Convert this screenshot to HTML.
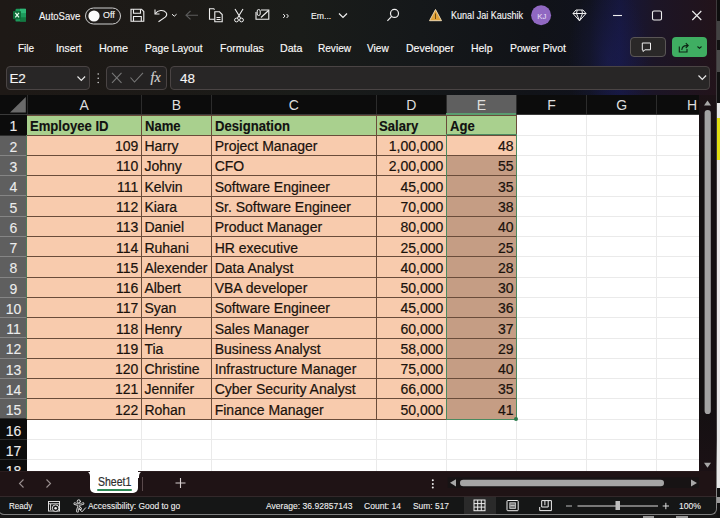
<!DOCTYPE html>
<html><head><meta charset="utf-8">
<style>
*{box-sizing:border-box;margin:0;padding:0}
html,body{width:720px;height:518px;overflow:hidden;background:#161314;font-family:"Liberation Sans",sans-serif;color:#fff;position:relative}
div,span,svg{position:absolute}
.t{white-space:nowrap;font-size:11px;color:#f6f6f6;line-height:12px;-webkit-text-stroke:0.12px #f6f6f6}
.tab{white-space:nowrap;font-size:11.5px;color:#fafafa;-webkit-text-stroke:0.15px #fafafa;line-height:12px;top:43px}
.box{border:1px solid #4a4848;background:rgba(255,255,255,0.05);border-radius:4px}
.ch{background:#0c0c0c;color:#dedede;font-size:14px;text-align:center;line-height:21px}
.rh{background:#0c0c0c;color:#ececec;font-size:14px;text-align:center;-webkit-text-stroke:0.1px #ececec}
.c{font-size:14px;color:#1a120c;white-space:nowrap;line-height:16px;-webkit-text-stroke:0.2px #1a120c}
.b{font-weight:bold;font-size:14px;transform:scaleX(0.935);transform-origin:0 0;-webkit-text-stroke:0.15px #111}
</style></head><body>

<div style="left:0;top:0;width:717px;height:96px;background:
 radial-gradient(ellipse 40px 80px at 608px 60px, rgba(35,38,120,0.32), rgba(35,38,120,0) 100%),
 linear-gradient(90deg,#1e1916 0px,#1c1a17 180px,#1a1c19 300px,#15181a 420px,#111318 530px,#10121c 590px,#15163a 620px,#1c1526 655px,#22131a 717px);"></div>
<div style="left:0;top:95.0px;width:699.3px;height:375.6px;background:#fff;overflow:hidden">
<div style="left:27px;top:40.0px;width:699.3px;height:1px;background:#eaeaea"></div>
<div style="left:27px;top:60.0px;width:699.3px;height:1px;background:#eaeaea"></div>
<div style="left:27px;top:80.0px;width:699.3px;height:1px;background:#eaeaea"></div>
<div style="left:27px;top:101.0px;width:699.3px;height:1px;background:#eaeaea"></div>
<div style="left:27px;top:121.0px;width:699.3px;height:1px;background:#eaeaea"></div>
<div style="left:27px;top:141.0px;width:699.3px;height:1px;background:#eaeaea"></div>
<div style="left:27px;top:161.0px;width:699.3px;height:1px;background:#eaeaea"></div>
<div style="left:27px;top:182.0px;width:699.3px;height:1px;background:#eaeaea"></div>
<div style="left:27px;top:202.0px;width:699.3px;height:1px;background:#eaeaea"></div>
<div style="left:27px;top:222.0px;width:699.3px;height:1px;background:#eaeaea"></div>
<div style="left:27px;top:243.0px;width:699.3px;height:1px;background:#eaeaea"></div>
<div style="left:27px;top:263.0px;width:699.3px;height:1px;background:#eaeaea"></div>
<div style="left:27px;top:283.0px;width:699.3px;height:1px;background:#eaeaea"></div>
<div style="left:27px;top:303.0px;width:699.3px;height:1px;background:#eaeaea"></div>
<div style="left:27px;top:324.0px;width:699.3px;height:1px;background:#eaeaea"></div>
<div style="left:27px;top:344.0px;width:699.3px;height:1px;background:#eaeaea"></div>
<div style="left:27px;top:364.0px;width:699.3px;height:1px;background:#eaeaea"></div>
<div style="left:27px;top:384.0px;width:699.3px;height:1px;background:#eaeaea"></div>
<div style="left:27px;top:405.0px;width:699.3px;height:1px;background:#eaeaea"></div>
<div style="left:141px;top:0;width:1px;height:375.6px;background:#eaeaea"></div>
<div style="left:211px;top:0;width:1px;height:375.6px;background:#eaeaea"></div>
<div style="left:376px;top:0;width:1px;height:375.6px;background:#eaeaea"></div>
<div style="left:446px;top:0;width:1px;height:375.6px;background:#eaeaea"></div>
<div style="left:516px;top:0;width:1px;height:375.6px;background:#eaeaea"></div>
<div style="left:586px;top:0;width:1px;height:375.6px;background:#eaeaea"></div>
<div style="left:656px;top:0;width:1px;height:375.6px;background:#eaeaea"></div>
<div style="left:27px;top:19.9px;width:489.5px;height:20.27px;background:#a9d08e"></div>
<div style="left:27px;top:40.17px;width:489.5px;height:283.78px;background:#f8cbad"></div>
<div style="left:446.3px;top:60.44px;width:70.19999999999999px;height:263.51px;background:#c59d84"></div>
<div style="left:27px;top:20.0px;width:489.5px;height:1px;background:#6a4c3a"></div>
<div style="left:27px;top:40.0px;width:489.5px;height:1px;background:#6a4c3a"></div>
<div style="left:27px;top:60.0px;width:489.5px;height:1px;background:#6a4c3a"></div>
<div style="left:27px;top:80.0px;width:489.5px;height:1px;background:#6a4c3a"></div>
<div style="left:27px;top:101.0px;width:489.5px;height:1px;background:#6a4c3a"></div>
<div style="left:27px;top:121.0px;width:489.5px;height:1px;background:#6a4c3a"></div>
<div style="left:27px;top:141.0px;width:489.5px;height:1px;background:#6a4c3a"></div>
<div style="left:27px;top:161.0px;width:489.5px;height:1px;background:#6a4c3a"></div>
<div style="left:27px;top:182.0px;width:489.5px;height:1px;background:#6a4c3a"></div>
<div style="left:27px;top:202.0px;width:489.5px;height:1px;background:#6a4c3a"></div>
<div style="left:27px;top:222.0px;width:489.5px;height:1px;background:#6a4c3a"></div>
<div style="left:27px;top:243.0px;width:489.5px;height:1px;background:#6a4c3a"></div>
<div style="left:27px;top:263.0px;width:489.5px;height:1px;background:#6a4c3a"></div>
<div style="left:27px;top:283.0px;width:489.5px;height:1px;background:#6a4c3a"></div>
<div style="left:27px;top:303.0px;width:489.5px;height:1px;background:#6a4c3a"></div>
<div style="left:27px;top:324.0px;width:489.5px;height:1px;background:#6a4c3a"></div>
<div style="left:141px;top:19.9px;width:1px;height:304.05px;background:#6a4c3a"></div>
<div style="left:211px;top:19.9px;width:1px;height:304.05px;background:#6a4c3a"></div>
<div style="left:376px;top:19.9px;width:1px;height:304.05px;background:#6a4c3a"></div>
<div style="left:446px;top:19.9px;width:1px;height:304.05px;background:#6a4c3a"></div>
<div style="left:516px;top:19.9px;width:1px;height:304.05px;background:#6a4c3a"></div>
<div class="ch" style="left:27px;top:0;width:114.4px;height:19.900000000000006px;background:#0c0c0c">A</div>
<div style="left:26.5px;top:0;width:1px;height:19.900000000000006px;background:#2c2c2c"></div>
<div class="ch" style="left:141.4px;top:0;width:70.29999999999998px;height:19.900000000000006px;background:#0c0c0c">B</div>
<div style="left:140.9px;top:0;width:1px;height:19.900000000000006px;background:#2c2c2c"></div>
<div class="ch" style="left:211.7px;top:0;width:164.40000000000003px;height:19.900000000000006px;background:#0c0c0c">C</div>
<div style="left:211.2px;top:0;width:1px;height:19.900000000000006px;background:#2c2c2c"></div>
<div class="ch" style="left:376.1px;top:0;width:70.19999999999999px;height:19.900000000000006px;background:#0c0c0c">D</div>
<div style="left:375.6px;top:0;width:1px;height:19.900000000000006px;background:#2c2c2c"></div>
<div class="ch" style="left:446.3px;top:0;width:70.19999999999999px;height:19.900000000000006px;background:#5f5f5f">E</div>
<div style="left:445.8px;top:0;width:1px;height:19.900000000000006px;background:#2c2c2c"></div>
<div class="ch" style="left:516.5px;top:0;width:70.20000000000005px;height:19.900000000000006px;background:#0c0c0c">F</div>
<div style="left:516.0px;top:0;width:1px;height:19.900000000000006px;background:#2c2c2c"></div>
<div class="ch" style="left:586.7px;top:0;width:70.19999999999993px;height:19.900000000000006px;background:#0c0c0c">G</div>
<div style="left:586.2px;top:0;width:1px;height:19.900000000000006px;background:#2c2c2c"></div>
<div class="ch" style="left:656.9px;top:0;width:70.10000000000002px;height:19.900000000000006px;background:#0c0c0c">H</div>
<div style="left:656.4px;top:0;width:1px;height:19.900000000000006px;background:#2c2c2c"></div>
<div style="left:0;top:0;width:27px;height:19.900000000000006px;background:#0c0c0c"></div>
<svg style="left:0;top:0" width="27" height="20"><polygon points="25.8,2 25.8,17.5 10,17.5" fill="#6a6a6a"/></svg>
<div style="left:0;top:18.9px;width:699.3px;height:1px;background:#3a3a3a"></div>
<div style="left:446.3px;top:18.4px;width:70.19999999999999px;height:1.5px;background:#5a9d70"></div>
<div class="rh" style="left:0;top:19.9px;width:27px;height:20.27px;background:#0c0c0c;line-height:20.27px;padding-top:1.6px">1</div>
<div class="rh" style="left:0;top:40.17px;width:27px;height:20.27px;background:#5f5f5f;line-height:20.27px;padding-top:1.6px">2</div>
<div class="rh" style="left:0;top:60.44px;width:27px;height:20.27px;background:#5f5f5f;line-height:20.27px;padding-top:1.6px">3</div>
<div class="rh" style="left:0;top:80.71px;width:27px;height:20.27px;background:#5f5f5f;line-height:20.27px;padding-top:1.6px">4</div>
<div class="rh" style="left:0;top:100.98px;width:27px;height:20.27px;background:#5f5f5f;line-height:20.27px;padding-top:1.6px">5</div>
<div class="rh" style="left:0;top:121.25px;width:27px;height:20.27px;background:#5f5f5f;line-height:20.27px;padding-top:1.6px">6</div>
<div class="rh" style="left:0;top:141.52px;width:27px;height:20.27px;background:#5f5f5f;line-height:20.27px;padding-top:1.6px">7</div>
<div class="rh" style="left:0;top:161.79px;width:27px;height:20.27px;background:#5f5f5f;line-height:20.27px;padding-top:1.6px">8</div>
<div class="rh" style="left:0;top:182.06px;width:27px;height:20.27px;background:#5f5f5f;line-height:20.27px;padding-top:1.6px">9</div>
<div class="rh" style="left:0;top:202.33px;width:27px;height:20.27px;background:#5f5f5f;line-height:20.27px;padding-top:1.6px">10</div>
<div class="rh" style="left:0;top:222.6px;width:27px;height:20.27px;background:#5f5f5f;line-height:20.27px;padding-top:1.6px">11</div>
<div class="rh" style="left:0;top:242.87px;width:27px;height:20.27px;background:#5f5f5f;line-height:20.27px;padding-top:1.6px">12</div>
<div class="rh" style="left:0;top:263.14px;width:27px;height:20.27px;background:#5f5f5f;line-height:20.27px;padding-top:1.6px">13</div>
<div class="rh" style="left:0;top:283.41px;width:27px;height:20.27px;background:#5f5f5f;line-height:20.27px;padding-top:1.6px">14</div>
<div class="rh" style="left:0;top:303.68px;width:27px;height:20.27px;background:#5f5f5f;line-height:20.27px;padding-top:1.6px">15</div>
<div class="rh" style="left:0;top:323.95px;width:27px;height:20.27px;background:#0c0c0c;line-height:20.27px;padding-top:1.6px">16</div>
<div class="rh" style="left:0;top:344.22px;width:27px;height:20.27px;background:#0c0c0c;line-height:20.27px;padding-top:1.6px">17</div>
<div class="rh" style="left:0;top:364.49px;width:27px;height:20.27px;background:#0c0c0c;line-height:20.27px;padding-top:1.6px">18</div>
<div style="left:0;top:39.67px;width:27px;height:1px;background:#2c2c2c"></div>
<div style="left:0;top:59.94px;width:27px;height:1px;background:#858585"></div>
<div style="left:0;top:80.21px;width:27px;height:1px;background:#858585"></div>
<div style="left:0;top:100.48px;width:27px;height:1px;background:#858585"></div>
<div style="left:0;top:120.75px;width:27px;height:1px;background:#858585"></div>
<div style="left:0;top:141.02px;width:27px;height:1px;background:#858585"></div>
<div style="left:0;top:161.29px;width:27px;height:1px;background:#858585"></div>
<div style="left:0;top:181.56px;width:27px;height:1px;background:#858585"></div>
<div style="left:0;top:201.83px;width:27px;height:1px;background:#858585"></div>
<div style="left:0;top:222.1px;width:27px;height:1px;background:#858585"></div>
<div style="left:0;top:242.37px;width:27px;height:1px;background:#858585"></div>
<div style="left:0;top:262.64px;width:27px;height:1px;background:#858585"></div>
<div style="left:0;top:282.91px;width:27px;height:1px;background:#858585"></div>
<div style="left:0;top:303.18px;width:27px;height:1px;background:#858585"></div>
<div style="left:0;top:323.45px;width:27px;height:1px;background:#2c2c2c"></div>
<div style="left:0;top:343.72px;width:27px;height:1px;background:#2c2c2c"></div>
<div style="left:0;top:363.99px;width:27px;height:1px;background:#2c2c2c"></div>
<div style="left:0;top:384.26px;width:27px;height:1px;background:#2c2c2c"></div>
<div style="left:0;top:19.4px;width:27px;height:1px;background:#3a3a3a"></div>
<div style="left:26px;top:40.17px;width:1.2px;height:283.78px;background:#4d7a5a"></div>
<div class="c b" style="left:30.3px;top:23.4px;color:#111">Employee ID</div>
<div class="c b" style="left:144.70000000000002px;top:23.4px;color:#111">Name</div>
<div class="c b" style="left:215.0px;top:23.4px;color:#111">Designation</div>
<div class="c b" style="left:379.40000000000003px;top:23.4px;color:#111">Salary</div>
<div class="c b" style="left:449.6px;top:23.4px;color:#111">Age</div>
<div class="c" style="left:27px;width:111.4px;text-align:right;top:43.17px">109</div>
<div class="c" style="left:144.4px;top:43.17px">Harry</div>
<div class="c" style="left:214.7px;top:43.17px">Project Manager</div>
<div class="c" style="left:376.1px;width:67.19999999999999px;text-align:right;top:43.17px">1,00,000</div>
<div class="c" style="left:446.3px;width:67.19999999999999px;text-align:right;top:43.17px">48</div>
<div class="c" style="left:27px;width:111.4px;text-align:right;top:63.44px">110</div>
<div class="c" style="left:144.4px;top:63.44px">Johny</div>
<div class="c" style="left:214.7px;top:63.44px">CFO</div>
<div class="c" style="left:376.1px;width:67.19999999999999px;text-align:right;top:63.44px">2,00,000</div>
<div class="c" style="left:446.3px;width:67.19999999999999px;text-align:right;top:63.44px">55</div>
<div class="c" style="left:27px;width:111.4px;text-align:right;top:83.71px">111</div>
<div class="c" style="left:144.4px;top:83.71px">Kelvin</div>
<div class="c" style="left:214.7px;top:83.71px">Software Engineer</div>
<div class="c" style="left:376.1px;width:67.19999999999999px;text-align:right;top:83.71px">45,000</div>
<div class="c" style="left:446.3px;width:67.19999999999999px;text-align:right;top:83.71px">35</div>
<div class="c" style="left:27px;width:111.4px;text-align:right;top:103.98px">112</div>
<div class="c" style="left:144.4px;top:103.98px">Kiara</div>
<div class="c" style="left:214.7px;top:103.98px">Sr. Software Engineer</div>
<div class="c" style="left:376.1px;width:67.19999999999999px;text-align:right;top:103.98px">70,000</div>
<div class="c" style="left:446.3px;width:67.19999999999999px;text-align:right;top:103.98px">38</div>
<div class="c" style="left:27px;width:111.4px;text-align:right;top:124.25px">113</div>
<div class="c" style="left:144.4px;top:124.25px">Daniel</div>
<div class="c" style="left:214.7px;top:124.25px">Product Manager</div>
<div class="c" style="left:376.1px;width:67.19999999999999px;text-align:right;top:124.25px">80,000</div>
<div class="c" style="left:446.3px;width:67.19999999999999px;text-align:right;top:124.25px">40</div>
<div class="c" style="left:27px;width:111.4px;text-align:right;top:144.52px">114</div>
<div class="c" style="left:144.4px;top:144.52px">Ruhani</div>
<div class="c" style="left:214.7px;top:144.52px">HR executive</div>
<div class="c" style="left:376.1px;width:67.19999999999999px;text-align:right;top:144.52px">25,000</div>
<div class="c" style="left:446.3px;width:67.19999999999999px;text-align:right;top:144.52px">25</div>
<div class="c" style="left:27px;width:111.4px;text-align:right;top:164.79px">115</div>
<div class="c" style="left:144.4px;top:164.79px">Alexender</div>
<div class="c" style="left:214.7px;top:164.79px">Data Analyst</div>
<div class="c" style="left:376.1px;width:67.19999999999999px;text-align:right;top:164.79px">40,000</div>
<div class="c" style="left:446.3px;width:67.19999999999999px;text-align:right;top:164.79px">28</div>
<div class="c" style="left:27px;width:111.4px;text-align:right;top:185.06px">116</div>
<div class="c" style="left:144.4px;top:185.06px">Albert</div>
<div class="c" style="left:214.7px;top:185.06px">VBA developer</div>
<div class="c" style="left:376.1px;width:67.19999999999999px;text-align:right;top:185.06px">50,000</div>
<div class="c" style="left:446.3px;width:67.19999999999999px;text-align:right;top:185.06px">30</div>
<div class="c" style="left:27px;width:111.4px;text-align:right;top:205.33px">117</div>
<div class="c" style="left:144.4px;top:205.33px">Syan</div>
<div class="c" style="left:214.7px;top:205.33px">Software Engineer</div>
<div class="c" style="left:376.1px;width:67.19999999999999px;text-align:right;top:205.33px">45,000</div>
<div class="c" style="left:446.3px;width:67.19999999999999px;text-align:right;top:205.33px">36</div>
<div class="c" style="left:27px;width:111.4px;text-align:right;top:225.6px">118</div>
<div class="c" style="left:144.4px;top:225.6px">Henry</div>
<div class="c" style="left:214.7px;top:225.6px">Sales Manager</div>
<div class="c" style="left:376.1px;width:67.19999999999999px;text-align:right;top:225.6px">60,000</div>
<div class="c" style="left:446.3px;width:67.19999999999999px;text-align:right;top:225.6px">37</div>
<div class="c" style="left:27px;width:111.4px;text-align:right;top:245.87px">119</div>
<div class="c" style="left:144.4px;top:245.87px">Tia</div>
<div class="c" style="left:214.7px;top:245.87px">Business Analyst</div>
<div class="c" style="left:376.1px;width:67.19999999999999px;text-align:right;top:245.87px">58,000</div>
<div class="c" style="left:446.3px;width:67.19999999999999px;text-align:right;top:245.87px">29</div>
<div class="c" style="left:27px;width:111.4px;text-align:right;top:266.14px">120</div>
<div class="c" style="left:144.4px;top:266.14px">Christine</div>
<div class="c" style="left:214.7px;top:266.14px">Infrastructure Manager</div>
<div class="c" style="left:376.1px;width:67.19999999999999px;text-align:right;top:266.14px">75,000</div>
<div class="c" style="left:446.3px;width:67.19999999999999px;text-align:right;top:266.14px">40</div>
<div class="c" style="left:27px;width:111.4px;text-align:right;top:286.41px">121</div>
<div class="c" style="left:144.4px;top:286.41px">Jennifer</div>
<div class="c" style="left:214.7px;top:286.41px">Cyber Security Analyst</div>
<div class="c" style="left:376.1px;width:67.19999999999999px;text-align:right;top:286.41px">66,000</div>
<div class="c" style="left:446.3px;width:67.19999999999999px;text-align:right;top:286.41px">35</div>
<div class="c" style="left:27px;width:111.4px;text-align:right;top:306.68px">122</div>
<div class="c" style="left:144.4px;top:306.68px">Rohan</div>
<div class="c" style="left:214.7px;top:306.68px">Finance Manager</div>
<div class="c" style="left:376.1px;width:67.19999999999999px;text-align:right;top:306.68px">50,000</div>
<div class="c" style="left:446.3px;width:67.19999999999999px;text-align:right;top:306.68px">41</div>
<div style="left:445.5px;top:39.370000000000005px;width:71.79999999999998px;height:285.38000000000005px;border:1.3px solid #4a8a60"></div>
<div style="left:514.2px;top:321.65px;width:4px;height:4px;background:#2a7a4c;border-radius:2px"></div>
</div>
<svg style="left:0;top:0" width="717" height="32"><rect x="15.5" y="8.8" width="10.5" height="12.8" rx="1.2" fill="#1d9a5c"/><rect x="20" y="8.8" width="6" height="4.3" fill="#2fb877"/><rect x="20" y="17.3" width="6" height="4.3" fill="#127a42"/><rect x="13" y="11" width="8" height="8.2" rx="0.8" fill="#0f6e3a"/><path d="M15.3 12.9 L19 17.3 M19 12.9 L15.3 17.3" stroke="#e8fff0" stroke-width="1.2"/><rect x="85.5" y="8" width="35" height="16" rx="8" fill="#1f1c1a" stroke="#cfcfcf" stroke-width="1"/><circle cx="94" cy="16" r="5.6" fill="#fafafa"/><path d="M131 9.2 H141.5 L143.8 11.5 V21.3 H131 Z" fill="none" stroke="#efefef" stroke-width="1.1"/><path d="M133.5 9.2 V13.3 H140.5 V9.2" fill="none" stroke="#efefef" stroke-width="1.1"/><path d="M133.5 21.3 V16.5 H141.3 V21.3" fill="none" stroke="#efefef" stroke-width="1.1"/><path d="M155 9.5 V14 H159.5" fill="none" stroke="#efefef" stroke-width="1.1"/><path d="M155.3 13.6 C158 10 163.5 9.5 166 12.5 C167.2 14 166.8 15.6 165.2 17.2 L158.5 21.8" fill="none" stroke="#efefef" stroke-width="1.1"/><path d="M172 14.2 L174.3 16.2 L176.6 14.2" fill="none" stroke="#efefef" stroke-width="1"/><path d="M186 15.2 H198 M190.5 11 L186 15.2 L190.5 19.4" fill="none" stroke="#5c5c5c" stroke-width="1.1"/><path d="M214.5 19.2 H209.5 V8.8 H213.8 L214.5 9.8" fill="none" stroke="#efefef" stroke-width="1.1"/><path d="M214.8 11.8 H219.5 L222.2 14.5 V21.7 H214.8 Z" fill="none" stroke="#efefef" stroke-width="1.1"/><path d="M216.5 17.5 H220.5 M216.5 19.5 H220.5" stroke="#efefef" stroke-width="1"/><path d="M235 9 L240.5 18 M243 9 L237.5 18" stroke="#efefef" stroke-width="1.1"/><circle cx="236.5" cy="20" r="1.9" fill="none" stroke="#efefef" stroke-width="1"/><circle cx="241.5" cy="20" r="1.9" fill="none" stroke="#efefef" stroke-width="1"/><path d="M256 12 V19.3 H268.8 V10 H261" fill="none" stroke="#efefef" stroke-width="1.1"/><path d="M261 17.5 L268.5 10.5" stroke="#efefef" stroke-width="1.1"/><rect x="257.2" y="9.5" width="3" height="6" rx="1.5" fill="none" stroke="#efefef" stroke-width="1"/><path d="M283.2 14 L285 16 L283.2 18 M286.6 14 L288.4 16 L286.6 18" fill="none" stroke="#efefef" stroke-width="1"/><path d="M339 13.5 L343 17.5 L347 13.5" fill="none" stroke="#efefef" stroke-width="1.2"/><circle cx="394.5" cy="13.4" r="4" fill="none" stroke="#efefef" stroke-width="1.2"/><path d="M391.6 16.4 L387.4 20.8" stroke="#efefef" stroke-width="1.2"/><path d="M435.5 9.5 L441.5 20.7 H429.5 Z" fill="#e0a238" stroke="#f4e2bf" stroke-width="0.9" stroke-linejoin="round"/><path d="M435.5 13.5 V19" stroke="#6a4a14" stroke-width="1"/><circle cx="541.1" cy="15.3" r="10" fill="#9068c2"/><path d="M576 10 H583 L586 13.5 L579.5 20.8 L573 13.5 Z M573 13.5 H586 M577.2 10 L576.5 13.5 L579.5 20.8 L582.5 13.5 L581.8 10" fill="none" stroke="#efefef" stroke-width="1"/><path d="M613 15.5 H622" stroke="#efefef" stroke-width="1.1"/><rect x="652.5" y="11" width="9" height="9" rx="1.5" fill="none" stroke="#efefef" stroke-width="1.1"/><path d="M692.3 11 L701.3 20 M701.3 11 L692.3 20" stroke="#efefef" stroke-width="1.1"/></svg>
<div style="left:38.8px;top:8.73px;font-size:10.6px;line-height:14px;color:#f6f6f6;white-space:nowrap;-webkit-text-stroke:0.12px #f6f6f6;transform:scaleX(0.898);transform-origin:0 0;">AutoSave</div>
<div style="left:103.3px;top:9.79px;font-size:8.7px;line-height:11px;color:#f6f6f6;white-space:nowrap;-webkit-text-stroke:0.12px #f6f6f6;transform:scaleX(1.023);transform-origin:0 0;">Off</div>
<div style="left:310.8px;top:9.10px;font-size:9.8px;line-height:13px;color:#f6f6f6;white-space:nowrap;-webkit-text-stroke:0.12px #f6f6f6;transform:scaleX(0.883);transform-origin:0 0;">Em...</div>
<div style="left:451px;top:8.79px;font-size:10px;line-height:13px;color:#f6f6f6;white-space:nowrap;-webkit-text-stroke:0.12px #f6f6f6;transform:scaleX(0.906);transform-origin:0 0;">Kunal Jai Kaushik</div>
<div class="t" style="left:537.3px;top:12px;font-size:7.8px;line-height:9px;color:#ece0f8;-webkit-text-stroke:0">KJ</div>
<div style="left:17.8px;top:41.09px;font-size:11px;line-height:14px;color:#fafafa;white-space:nowrap;-webkit-text-stroke:0.15px #fafafa;transform:scaleX(0.908);transform-origin:0 0;">File</div>
<div style="left:56px;top:41.09px;font-size:11px;line-height:14px;color:#fafafa;white-space:nowrap;-webkit-text-stroke:0.15px #fafafa;transform:scaleX(0.934);transform-origin:0 0;">Insert</div>
<div style="left:99px;top:41.09px;font-size:11px;line-height:14px;color:#fafafa;white-space:nowrap;-webkit-text-stroke:0.15px #fafafa;transform:scaleX(0.988);transform-origin:0 0;">Home</div>
<div style="left:145px;top:41.09px;font-size:11px;line-height:14px;color:#fafafa;white-space:nowrap;-webkit-text-stroke:0.15px #fafafa;transform:scaleX(0.931);transform-origin:0 0;">Page Layout</div>
<div style="left:220px;top:41.09px;font-size:11px;line-height:14px;color:#fafafa;white-space:nowrap;-webkit-text-stroke:0.15px #fafafa;transform:scaleX(0.954);transform-origin:0 0;">Formulas</div>
<div style="left:279.5px;top:41.09px;font-size:11px;line-height:14px;color:#fafafa;white-space:nowrap;-webkit-text-stroke:0.15px #fafafa;transform:scaleX(0.968);transform-origin:0 0;">Data</div>
<div style="left:317.5px;top:41.09px;font-size:11px;line-height:14px;color:#fafafa;white-space:nowrap;-webkit-text-stroke:0.15px #fafafa;transform:scaleX(0.915);transform-origin:0 0;">Review</div>
<div style="left:367px;top:41.09px;font-size:11px;line-height:14px;color:#fafafa;white-space:nowrap;-webkit-text-stroke:0.15px #fafafa;transform:scaleX(0.919);transform-origin:0 0;">View</div>
<div style="left:405.8px;top:41.09px;font-size:11px;line-height:14px;color:#fafafa;white-space:nowrap;-webkit-text-stroke:0.15px #fafafa;transform:scaleX(0.957);transform-origin:0 0;">Developer</div>
<div style="left:471px;top:41.09px;font-size:11px;line-height:14px;color:#fafafa;white-space:nowrap;-webkit-text-stroke:0.15px #fafafa;transform:scaleX(0.950);transform-origin:0 0;">Help</div>
<div style="left:510px;top:41.09px;font-size:11px;line-height:14px;color:#fafafa;white-space:nowrap;-webkit-text-stroke:0.15px #fafafa;transform:scaleX(0.954);transform-origin:0 0;">Power Pivot</div>
<div style="left:630px;top:37px;width:36px;height:20px;border:1px solid #5a5656;border-radius:4px;background:#2a2828"></div>
<svg style="left:630px;top:37px" width="36" height="20"><path d="M12.3 6 H20.5 V12.8 H15 L13 14.5 V12.8 H12.3 Z" fill="none" stroke="#efefef" stroke-width="1" stroke-linejoin="round"/></svg>
<div style="left:672px;top:37px;width:34.5px;height:20px;border-radius:4px;background:#3fae62"></div>
<svg style="left:672px;top:37px" width="35" height="20"><path d="M7.3 9.5 V15 H15 V12" fill="none" stroke="#0c2414" stroke-width="1.1"/><path d="M9.8 13 C10 9.8 11.8 8.6 14.5 8.6 H16.2 M13.8 6.2 L16.2 8.6 L13.8 11" fill="none" stroke="#0c2414" stroke-width="1.1"/><path d="M25.5 9.5 L27.5 11.3 L29.5 9.5" fill="none" stroke="#0c2414" stroke-width="1.1"/></svg>
<div style="left:6px;top:66px;width:83.5px;height:23.5px;border:1px solid #4a4444;border-radius:4px;background:#282626"></div>
<div class="t" style="left:9.6px;top:72px;font-size:13.5px;line-height:14px;letter-spacing:-0.4px">E2</div>
<div style="left:106px;top:66px;width:60.7px;height:23.5px;border:1px solid #4a4444;border-radius:4px;background:#242222"></div>
<div style="left:169.6px;top:66px;width:540px;height:23.5px;border:1px solid #4a4444;border-radius:4px;background:#282626"></div>
<div class="t" style="left:180px;top:72px;font-size:13.5px;line-height:14px">48</div>
<svg style="left:0;top:62px" width="717" height="33"><path d="M77.5 14.5 L81.3 18.3 L85.1 14.5" fill="none" stroke="#e8e8e8" stroke-width="1.2"/><circle cx="98.2" cy="12" r="0.75" fill="#ddd"/><circle cx="98.2" cy="16.3" r="0.75" fill="#ddd"/><circle cx="98.2" cy="20.6" r="0.75" fill="#ddd"/><path d="M112 10.8 L121.5 20.8 M121.5 10.8 L112 20.8" stroke="#777" stroke-width="1.1"/><path d="M130.5 15.5 L134.5 20 L143 10.8" fill="none" stroke="#777" stroke-width="1.1"/><path d="M698.5 13.5 L702.3 17.3 L706.1 13.5" fill="none" stroke="#e8e8e8" stroke-width="1.2"/></svg>
<div class="t" style="left:150.5px;top:71px;font-family:'Liberation Serif',serif;font-style:italic;font-size:14px;line-height:14px;color:#cfcfcf">fx</div>
<div style="left:699.3px;top:95px;width:17px;height:376px;background:linear-gradient(#1c1216,#131011 20%,#131011 80%,#1b1115)"></div>
<svg style="left:699px;top:95px" width="18" height="376"><path d="M5 10.5 L8.5 5.5 L12 10.5 Z" fill="#a8a8a8"/><rect x="5.6" y="15" width="6.2" height="304" rx="3.1" fill="#a3a3a3"/><path d="M5 367.8 L8.5 372.8 L12 367.8 Z" fill="#a8a8a8"/></svg>
<div style="left:84px;top:470px;width:60px;height:8px;background:#fff"></div>
<div style="left:0;top:470.6px;width:89.5px;height:25.4px;background:#1f1315;border-top-right-radius:5px"></div>
<div style="left:138.5px;top:470.6px;width:578.5px;height:25.4px;background:#1f1315;border-top-left-radius:5px"></div>
<div style="left:80px;top:478px;width:70px;height:18px;background:#1f1315"></div>
<div style="left:0;top:470.5px;width:699.4px;height:0.8px;background:#2a1c1e"></div>
<div style="left:89.8px;top:469px;width:48.4px;height:24px;background:#fff;border-radius:0 0 5px 5px"></div>
<div style="left:97.5px;top:473.64px;font-size:12px;line-height:16px;color:#2e2e2e;white-space:nowrap;-webkit-text-stroke:0.2px #2e2e2e;transform:scaleX(0.875);transform-origin:0 0;">Sheet1</div>
<div style="left:97px;top:489px;width:34.5px;height:2px;background:#2d8a56;border-radius:1px"></div>
<div style="left:141.5px;top:477px;width:1px;height:14px;background:#5a4a4c"></div>
<svg style="left:0;top:471px" width="699" height="25"><path d="M23.5 8.5 L19.5 12.5 L23.5 16.5" fill="none" stroke="#9a9090" stroke-width="1.1"/><path d="M46.5 8.5 L50.5 12.5 L46.5 16.5" fill="none" stroke="#9a9090" stroke-width="1.1"/><path d="M180.5 7 V17 M175.5 12 H185.5" stroke="#d8d0d0" stroke-width="1.1"/><circle cx="432.8" cy="9.2" r="1" fill="#eee"/><circle cx="432.8" cy="13" r="1" fill="#eee"/><circle cx="432.8" cy="16.6" r="1" fill="#eee"/><rect x="447.8" y="6.4" width="251.6" height="10.6" fill="#171314"/><path d="M456 8.2 L450 11.8 L456 15.4 Z" fill="#a8a8a8"/><rect x="460" y="8.7" width="204" height="6.6" rx="3.3" fill="#a5a5a5"/><path d="M691 8.4 L697 12 L691 15.6 Z" fill="#a8a8a8"/></svg>
<div style="left:0;top:496px;width:720px;height:22px;background:#161616"></div>
<div style="left:-2px;top:495.6px;width:718.6px;height:19.6px;background:#151616;border:1px solid #7e7e7e;border-top:1px solid #33282a;border-radius:0 0 6px 6px"></div>
<div style="left:8.9px;top:500.18px;font-size:9.3px;line-height:12px;color:#f0f0f0;white-space:nowrap;-webkit-text-stroke:0.1px #f0f0f0;transform:scaleX(0.867);transform-origin:0 0;">Ready</div>
<div style="left:88.3px;top:500.18px;font-size:9.3px;line-height:12px;color:#f0f0f0;white-space:nowrap;-webkit-text-stroke:0.1px #f0f0f0;transform:scaleX(0.906);transform-origin:0 0;">Accessibility: Good to go</div>
<div style="left:266px;top:500.18px;font-size:9.3px;line-height:12px;color:#f0f0f0;white-space:nowrap;-webkit-text-stroke:0.1px #f0f0f0;transform:scaleX(0.921);transform-origin:0 0;">Average: 36.92857143</div>
<div style="left:364px;top:500.18px;font-size:9.3px;line-height:12px;color:#f0f0f0;white-space:nowrap;-webkit-text-stroke:0.1px #f0f0f0;transform:scaleX(0.917);transform-origin:0 0;">Count: 14</div>
<div style="left:413px;top:500.18px;font-size:9.3px;line-height:12px;color:#f0f0f0;white-space:nowrap;-webkit-text-stroke:0.1px #f0f0f0;transform:scaleX(0.905);transform-origin:0 0;">Sum: 517</div>
<div style="left:679px;top:500.18px;font-size:9.3px;line-height:12px;color:#f0f0f0;white-space:nowrap;-webkit-text-stroke:0.1px #f0f0f0;transform:scaleX(0.925);transform-origin:0 0;">100%</div>
<div style="left:463.5px;top:497px;width:32.5px;height:16.5px;background:#2a2a2a"></div>
<svg style="left:0;top:496px" width="717" height="22"><rect x="48.5" y="5.5" width="11" height="9.5" fill="none" stroke="#ddd" stroke-width="1"/><path d="M48.5 7.8 H59.5 M50.6 8 V14" stroke="#ddd" stroke-width="1"/><circle cx="55.6" cy="12.2" r="3.3" fill="#151616" stroke="#ddd" stroke-width="1"/><circle cx="55.6" cy="12.2" r="1.3" fill="#eee"/><g fill="none" stroke-linecap="round" stroke-linejoin="round"><path d="M74.8 7.6 C76.5 8.6 80.5 8.6 83 7.6 M78.8 8.6 C79.5 11 77 12.5 77.5 15.3 M79.6 11.6 L80.6 12.8" stroke="#dcdcdc" stroke-width="2.6"/><path d="M74.8 7.6 C76.5 8.6 80.5 8.6 83 7.6 M78.8 8.6 C79.5 11 77 12.5 77.5 15.3 M79.6 11.6 L80.6 12.8" stroke="#151616" stroke-width="0.9"/><circle cx="78.8" cy="5.4" r="1.6" stroke="#dcdcdc" stroke-width="1"/><path d="M80 13.8 L82 15.8 L85.6 11.8" stroke="#dcdcdc" stroke-width="1"/></g><rect x="474" y="4" width="11" height="10.7" fill="none" stroke="#eee" stroke-width="1"/><path d="M477.7 4 V14.7 M481.3 4 V14.7 M474 7.6 H485 M474 11.1 H485" stroke="#eee" stroke-width="1"/><rect x="507" y="4.5" width="11.2" height="10.2" rx="0.8" fill="none" stroke="#eee" stroke-width="1"/><rect x="509.8" y="6.8" width="5.6" height="5.6" fill="#777" stroke="#ccc" stroke-width="0.9"/><path d="M510.5 9.6 H514.7" stroke="#ddd" stroke-width="0.8"/><path d="M539.7 11 V14.6 H551.4 V4.6 H541.7 V11 H548.2 V4.6 M544.9 4.6 V9.2" fill="none" stroke="#eee" stroke-width="1"/><path d="M566 10 H572" stroke="#bbb" stroke-width="1"/><path d="M577.5 10 H658" stroke="#9a9a9a" stroke-width="1.6"/><rect x="615.5" y="5" width="4.5" height="9" fill="#bdbdbd"/><path d="M662.7 10 H669 M665.85 6.8 V13.2" stroke="#ddd" stroke-width="1"/></svg>
<div style="left:715.6px;top:0;width:1px;height:508px;background:#3e3a3c"></div>
<div style="left:715.6px;top:440px;width:1px;height:68px;background:linear-gradient(#3e3a3c,#7a7a7a 40%,#8a8a8a)"></div>
<div style="left:716.5px;top:0;width:3.5px;height:518px;background:#e9e9e9"></div>
<div style="left:716.5px;top:0;width:3.5px;height:21px;background:#0e0e0e"></div>
<div style="left:716.5px;top:21px;width:3.5px;height:19px;background:#424242"></div>
<div style="left:716.5px;top:40px;width:3.5px;height:10px;background:#111"></div>
<div style="left:716.5px;top:50px;width:3.5px;height:22px;background:#4a4a4a"></div>
<div style="left:716.5px;top:72px;width:3.5px;height:31px;background:#111"></div>
<div style="left:716.5px;top:118px;width:3.5px;height:42px;background:#e2df12"></div>
<div style="left:716.5px;top:488px;width:3.5px;height:9px;background:#111"></div>
<div style="left:0;top:515.2px;width:717px;height:3px;background:#161616"></div>
<div style="left:643px;top:515.5px;width:11px;height:3px;background:#9a9a9a"></div>
<div style="left:676px;top:515.5px;width:12px;height:3px;background:#9a9a9a"></div>
<div style="left:716.5px;top:503px;width:3.5px;height:15px;background:#121212"></div>
<div style="left:716.5px;top:497px;width:3.5px;height:6px;background:#9a9a9a"></div>
</body></html>
